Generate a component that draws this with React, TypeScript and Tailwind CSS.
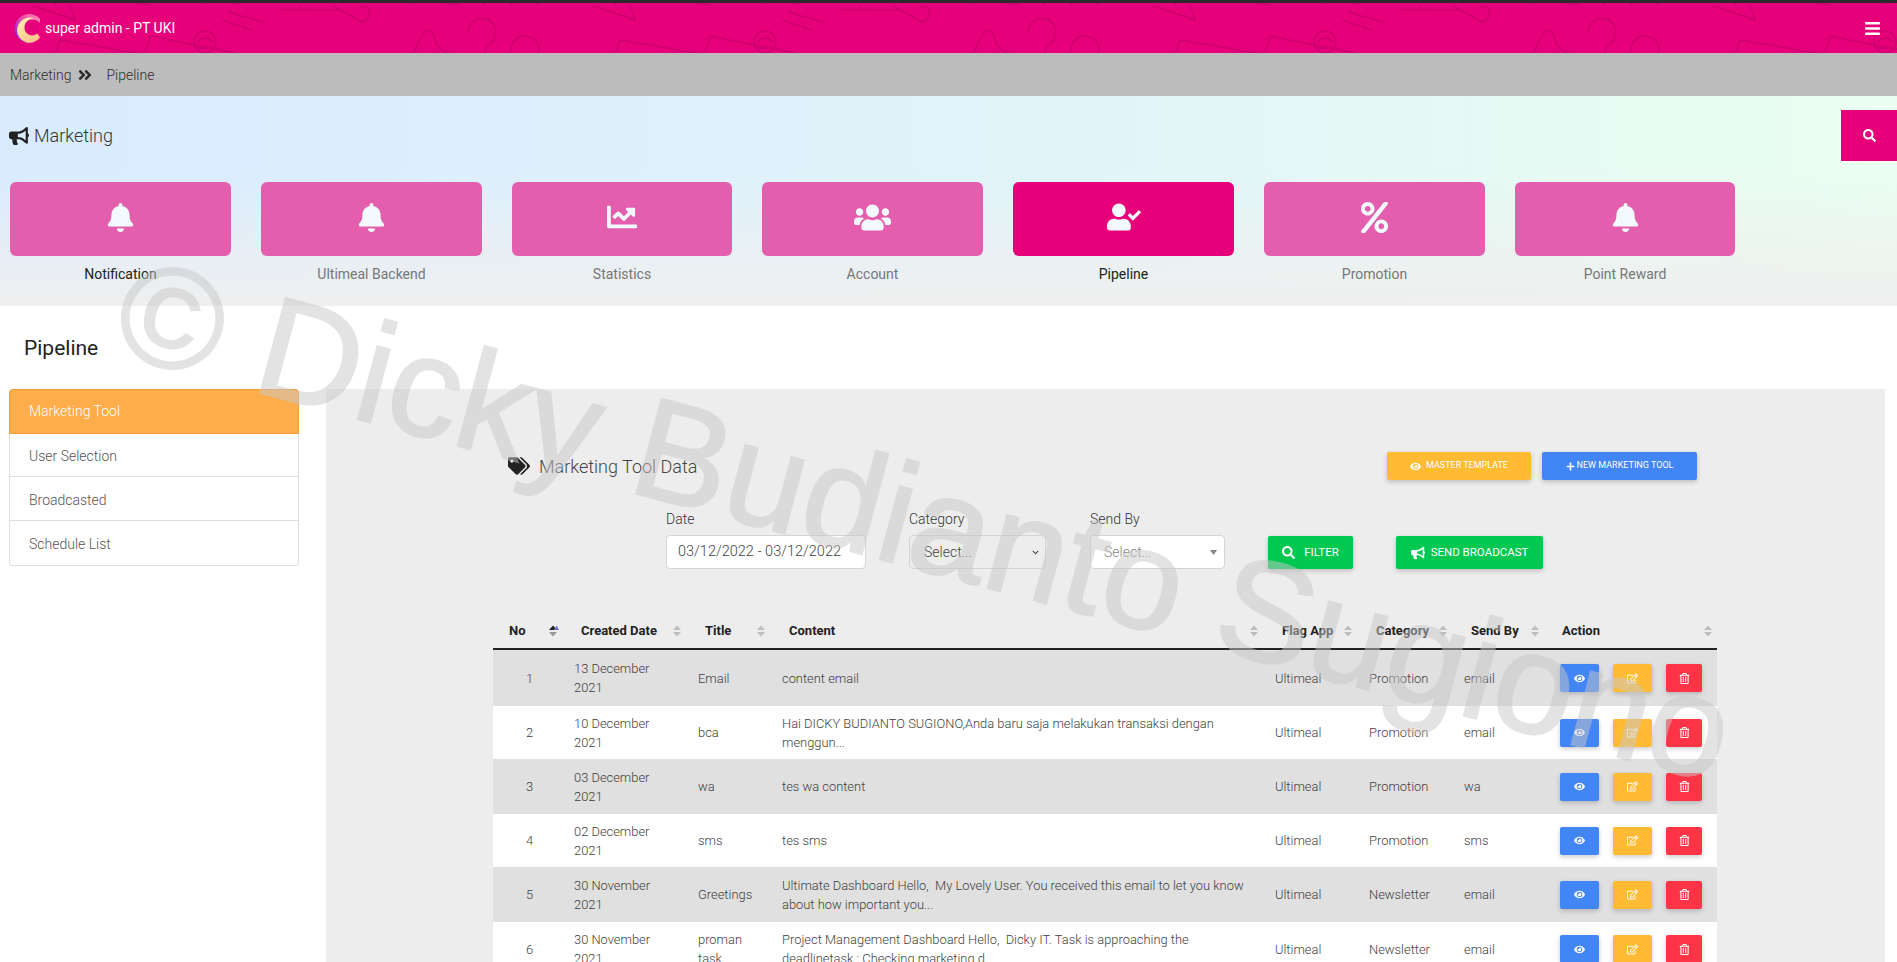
import React from "react";
import {
  FaBars, FaBell, FaBullhorn, FaChartLine, FaEye, FaPercent, FaPlus, FaRegEdit,
  FaRegTrashAlt, FaSearch, FaTags, FaUserCheck, FaUsers, FaAngleDoubleRight, FaChevronDown,
} from "react-icons/fa";

const cards = [
  { label: "Notification", Icon: FaBell, w: "w-[221px]", size: "text-[29px]", strong: true },
  { label: "Ultimeal Backend", Icon: FaBell, w: "w-[221px]", size: "text-[29px]" },
  { label: "Statistics", Icon: FaChartLine, w: "w-[220px]", size: "text-[30px]" },
  { label: "Account", Icon: FaUsers, w: "w-[221px]", size: "text-[37px]" },
  { label: "Pipeline", Icon: FaUserCheck, w: "w-[221px]", size: "text-[34px]", strong: true, active: true },
  { label: "Promotion", Icon: FaPercent, w: "w-[221px]", size: "text-[31px]" },
  { label: "Point Reward", Icon: FaBell, w: "w-[220px]", size: "text-[29px]" },
];

const rows = [
  ["1", "13 December 2021", "Email", "content email", "Promotion", "email", "h-[57px]"],
  ["2", "10 December 2021", "bca", "Hai DICKY BUDIANTO SUGIONO,Anda baru saja melakukan transaksi dengan menggun...", "Promotion", "email", "h-[53px]"],
  ["3", "03 December 2021", "wa", "tes wa content", "Promotion", "wa", "h-[55px]"],
  ["4", "02 December 2021", "sms", "tes sms", "Promotion", "sms", "h-[53px]"],
  ["5", "30 November 2021", "Greetings", "Ultimate Dashboard Hello,\u00a0 My Lovely User. You received this email to let you know about how important you...", "Newsletter", "email", "h-[55px]"],
  ["6", "30 November 2021", "proman task", "Project Management Dashboard Hello,\u00a0 Dicky IT. Task is approaching the deadlinetask : Checking marketing d", "Newsletter", "email", "h-[54px]"],
];

const heads = [
  { t: "No", w: "w-[73px]", pl: "pl-[16px]" },
  { t: "Created Date", w: "w-[124px]", pl: "pl-[15px]" },
  { t: "Title", w: "w-[84px]", pl: "pl-[15px]" },
  { t: "Content", w: "w-[493px]", pl: "pl-[15px]" },
  { t: "Flag App", w: "w-[94px]", pl: "pl-[15px]" },
  { t: "Category", w: "w-[95px]", pl: "pl-[15px]" },
  { t: "Send By", w: "w-[92px]", pl: "pl-[15px]" },
  { t: "Action", w: "w-[169px]", pl: "pl-[14px]" },
];

function Sort({ active }: { active?: boolean }) {
  return (
    <svg width="12" height="14" viewBox="0 0 12 14" className="shrink-0">
      <path d="M2 6 L6 1.5 L10 6 Z" fill={active ? "#222" : "#bdbdbd"} />
      {active && <path d="M7 6 L9.5 1.5 L12 6 Z" fill="#6d6fd6" />}
      <path d="M2 8 L6 12.5 L10 8 Z" fill={active ? "#999" : "#bdbdbd"} />
    </svg>
  );
}

function Logo() {
  return (
    <svg width="28" height="30" viewBox="0 0 28 30" className="shrink-0">
      <defs>
        <linearGradient id="lg-a" x1="0" y1="0.7" x2="1" y2="0.1">
          <stop offset="0" stopColor="#9a1fd0" />
          <stop offset="0.5" stopColor="#f04fa6" />
          <stop offset="1" stopColor="#f98ab8" />
        </linearGradient>
        <linearGradient id="lg-b" x1="0.2" y1="0" x2="0.6" y2="1">
          <stop offset="0" stopColor="#fff2b0" />
          <stop offset="1" stopColor="#ffc48c" />
        </linearGradient>
      </defs>
      <path d="M27 6 A14.5 14.5 0 1 0 27 25 L22 22 A9 9 0 0 1 10 14 A10 10 0 0 1 27 10 Z" fill="url(#lg-a)" />
      <path d="M22 5.5 A13 13 0 0 0 4 17 A12.5 12.5 0 0 0 27 24 L24 20.5 A7.5 7.5 0 0 1 11.5 15 A9 9 0 0 1 22 5.5 Z" fill="url(#lg-b)" />
    </svg>
  );
}

function Doodles() {
  const s = { fill: "none", stroke: "#cc006d", strokeWidth: 1.5 };
  return (
    <svg className="absolute inset-0 w-full h-full pointer-events-none" aria-hidden="true">
      <defs>
        <pattern id="doodle" x="-10" y="3" width="560" height="50" patternUnits="userSpaceOnUse">
          <g {...s}>
            <path d="M20 -8 L85 14 L78 -8" />
            <path d="M70 34 L165 50 M70 34 L62 58 M160 30 L250 48 M160 30 L152 58" />
            <path d="M238 6 l35 10 M232 14 l30 10" />
            <circle cx="215" cy="36" r="11" />
            <path d="M207 36 q8 -8 16 0 M207 42 h16" />
            <path d="M330 -8 L372 16 a9 9 0 0 0 6 -14 L350 -8" />
            <path d="M420 58 Q436 10 444 30 Q448 50 468 48" />
            <path d="M478 26 a14 14 0 1 1 22 12 q-6 4 -6 14" />
            <circle cx="535" cy="44" r="14" />
            <path d="M526 48 h1 M534 48 h1 M542 48 h1" />
            <path d="M290 4 h60 M290 -4 v8 M300 -4 v8 M310 -4 v8 M320 -4 v8" />
          </g>
        </pattern>
      </defs>
      <rect x="0" y="0" width="100%" height="100%" fill="url(#doodle)" />
    </svg>
  );
}

function ActionBtn({ color, w, children }: { color: string; w: string; children: React.ReactNode }) {
  return (
    <span className={`${color} ${w} h-[28px] rounded-[2px] flex items-center justify-center text-white text-[11px] shadow-[0_2px_5px_rgba(0,0,0,0.2)]`}>
      {children}
    </span>
  );
}

export default function App() {
  return (
    <div className="relative h-[962px] w-[1897px] overflow-hidden bg-white font-['Roboto',sans-serif] text-[14px] text-[#333]">
      <div className="h-[3px] bg-[#2b2b2b]" />
      <header className="relative h-[50px] bg-[#e6007a] flex items-center justify-between pl-[13px] pr-[16px] text-white">
        <Doodles />
        <div className="relative flex items-center gap-[4px]">
          <Logo />
          <span className="text-[14px]">super admin - PT UKI</span>
        </div>
        <FaBars className="relative text-[17px]" />
      </header>
      <nav className="h-[43px] bg-[#bcbcbc] flex items-center pl-[10px] pt-[1px] text-[14px] text-[#2e2e2e] font-light">
        <span>Marketing</span>
        <FaAngleDoubleRight className="ml-[6px] mr-[13px] text-[16px]" />
        <span>Pipeline</span>
      </nav>

      <section className="h-[210px] bg-[linear-gradient(to_bottom,rgba(240,240,240,0)_35%,#efefef_100%),linear-gradient(to_right,#d9ebff_0%,#dff3fa_50%,#eafff0_100%)]">
        <div className="flex items-start justify-between h-[86px]">
          <div className="flex items-center gap-[5px] pl-[9px] pt-[26px] text-[18px] font-light text-[#333]">
            <FaBullhorn className="text-[20px] text-[#222]" />
            <span>Marketing</span>
          </div>
          <div className="mt-[14px] w-[56px] h-[51px] bg-[#e6007a] text-white flex items-center justify-center">
            <FaSearch className="text-[13px]" />
          </div>
        </div>
        <div className="flex pl-[10px] gap-[30px]">
          {cards.map(({ label, Icon, w, size, strong, active }) => (
            <div key={label} className={`${w} flex flex-col items-center`}>
              <div className={`w-full h-[74px] rounded-[6px] flex items-center justify-center pb-[4px] ${size} text-[#f3faff] ${active ? "bg-[#e6007a]" : "bg-[#e35fae]"}`}>
                <Icon />
              </div>
              <div className={`mt-[8px] text-[14px] ${strong ? "text-[#222]" : "text-[#777]"}`}>{label}</div>
            </div>
          ))}
        </div>
      </section>

      <main className="flex items-start pl-[9px]">
        <aside className="w-[290px] shrink-0">
          <h2 className="pl-[15px] pt-[29px] h-[83px] text-[21px] leading-[26px] font-normal text-[#222]">Pipeline</h2>
          <ul className="rounded-[4px] border border-[#dedede] border-t-0 font-light text-[14px] text-[#555]">
            <li className="h-[45px] bg-[#ffad4a] border border-[#f59a32] -mx-px rounded-t-[4px] text-white flex items-center pl-[19px]">Marketing Tool</li>
            <li className="h-[43px] pt-[2px] border-b border-[#dedede] flex items-center pl-[19px]">User Selection</li>
            <li className="h-[44px] pt-[3px] border-b border-[#dedede] flex items-center pl-[19px]">Broadcasted</li>
            <li className="h-[44px] pt-[2px] flex items-center pl-[19px]">Schedule List</li>
          </ul>
        </aside>

        <div className="ml-[27px] mt-[83px] w-[1559px] h-[600px] bg-[#ededed] pl-[167px]">
          <div className="w-[1224px]">
            <div className="flex items-center h-[28px] mt-[63px] pl-[15px]">
              <FaTags className="text-[22px] text-[#222]" />
              <span className="ml-[9px] text-[18px] font-light text-[#444]">Marketing Tool Data</span>
              <div className="ml-auto flex gap-[11px] mr-[20px] text-white text-[9px] uppercase">
                <span className="w-[144px] h-[28px] rounded-[2px] bg-[#ffbb33] flex items-center justify-center gap-[5px] shadow-[0_2px_5px_rgba(0,0,0,0.2)]">
                  <FaEye className="text-[11px]" />Master Template
                </span>
                <span className="w-[155px] h-[28px] rounded-[2px] bg-[#4285f4] flex items-center justify-center gap-[2px] shadow-[0_2px_5px_rgba(0,0,0,0.2)]">
                  <FaPlus className="text-[9px]" />New Marketing Tool
                </span>
              </div>
            </div>

            <div className="flex items-end mt-[29px] pl-[173px] h-[60px]">
              <div className="w-[200px] mr-[43px]">
                <div className="font-light text-[#333] h-[26px]">Date</div>
                <div className="h-[34px] rounded-[4px] border border-[#d4d4d4] bg-white flex items-center pl-[11px] font-light text-[14.5px] text-[#444]">03/12/2022 - 03/12/2022</div>
              </div>
              <div className="w-[137px] mr-[44px]">
                <div className="font-light text-[#333] h-[26px]">Category</div>
                <div className="h-[34px] rounded-[4px] border border-[#d4d4d4] flex items-center justify-between pl-[14px] pr-[6px] font-light text-[#444]">
                  <span>Select...</span>
                  <FaChevronDown className="text-[7px]" />
                </div>
              </div>
              <div className="w-[135px] mr-[43px]">
                <div className="font-light text-[#333] h-[26px]">Send By</div>
                <div className="h-[34px] rounded-[4px] border border-[#d4d4d4] bg-white flex items-center justify-between pl-[13px] pr-[7px] font-light text-[#888]">
                  <span>Select...</span>
                  <svg width="7" height="5" viewBox="0 0 7 5"><path d="M0 0 H7 L3.5 5 Z" fill="#888" /></svg>
                </div>
              </div>
              <div className="w-[85px] h-[33px] mr-[43px] rounded-[2px] bg-[#00c851] text-white text-[11.5px] uppercase flex items-center justify-center gap-[9px] shadow-[0_2px_5px_rgba(0,0,0,0.2)]">
                <FaSearch className="text-[13px]" />Filter
              </div>
              <div className="w-[147px] h-[33px] rounded-[2px] bg-[#00c851] text-white text-[11.5px] uppercase flex items-center justify-center gap-[6px] shadow-[0_2px_5px_rgba(0,0,0,0.2)]">
                <FaBullhorn className="text-[14px]" />Send Broadcast
              </div>
            </div>

            <table className="table-fixed w-[1224px] mt-[43px] border-collapse text-[13px]">
              <thead>
                <tr className="h-[37px] border-b-2 border-[#222]">
                  {heads.map((h, i) => (
                    <th key={h.t} className={`${h.w} p-0 pt-[2px] ${h.pl} ${i === 7 ? "pr-[3px]" : "pr-[7px]"} font-bold text-[#222] text-left`}>
                      <div className="flex items-center justify-between">
                        <span>{h.t}</span>
                        <Sort active={i === 0} />
                      </div>
                    </th>
                  ))}
                </tr>
              </thead>
              <tbody className="font-light text-[12.9px] text-[#3f3f3f] leading-[19px]">
                {rows.map((r, i) => (
                  <tr key={r[0]} className={`${r[6]} ${i % 2 === 0 ? "bg-[#e0e0e0]" : "bg-white"}`}>
                    <td className="p-0 text-center">{r[0]}</td>
                    <td className="p-0 pl-[8px] pr-[20px]">{r[1]}</td>
                    <td className="p-0 pl-[8px] pr-[20px]">{r[2]}</td>
                    <td className="p-0 pl-[8px] pr-[12px]">{r[3]}</td>
                    <td className="p-0 pl-[8px]">Ultimeal</td>
                    <td className="p-0 pl-[8px]">{r[4]}</td>
                    <td className="p-0 pl-[8px]">{r[5]}</td>
                    <td className="p-0 pl-[12px]">
                      <div className="flex gap-[14px]">
                        <ActionBtn color="bg-[#4285f4]" w="w-[39px]"><FaEye /></ActionBtn>
                        <ActionBtn color="bg-[#ffbb33]" w="w-[39px]"><FaRegEdit /></ActionBtn>
                        <ActionBtn color="bg-[#ff3547]" w="w-[36px]"><FaRegTrashAlt /></ActionBtn>
                      </div>
                    </td>
                  </tr>
                ))}
              </tbody>
            </table>
          </div>
        </div>
      </main>

      <div className="absolute left-[925px] top-[520px] -translate-x-1/2 -translate-y-1/2 rotate-[15deg] whitespace-nowrap pointer-events-none opacity-50 font-['Liberation_Sans',sans-serif] text-[143px] leading-none text-[#c8c8c8] [-webkit-text-stroke:2px_#c8c8c8]">
        © Dicky Budianto Sugiono
      </div>
    </div>
  );
}
